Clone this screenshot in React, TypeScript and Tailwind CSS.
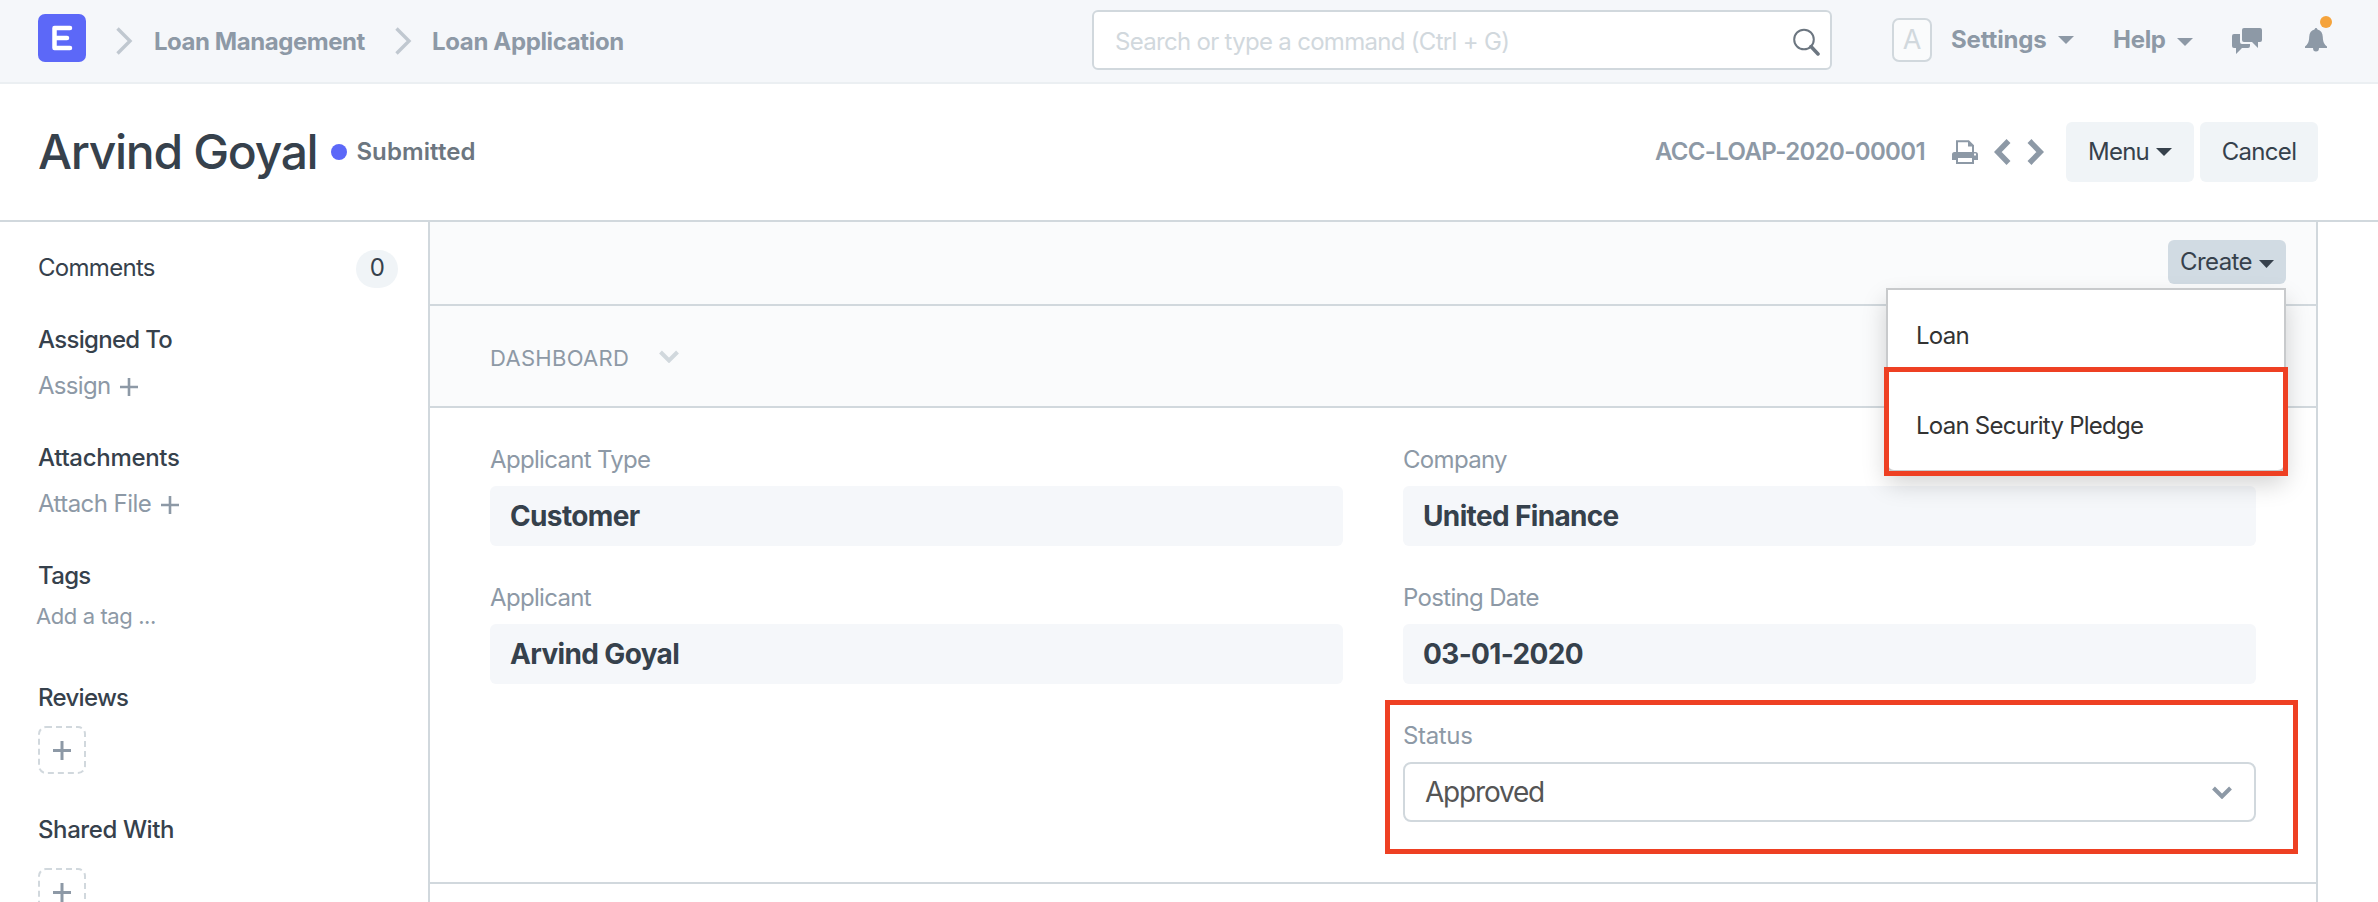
const Plus = () => (
  <svg width="18" height="18" viewBox="0 0 18 18" className="mt-0.5 shrink-0"><path d="M9 0v18M0 9h18" stroke="#8d99a6" strokeWidth="2.600" /></svg>
);

const Caret = ({ w = 16, h = 8 }: { w?: number; h?: number }) => (
  <svg width={w} height={h} viewBox="0 0 16 8" preserveAspectRatio="none" fill="currentColor" className="shrink-0"><path d="M0 0h16L8 8z" /></svg>
);

const Crumb = () => (
  <svg width="18" height="28" viewBox="0 0 18 28" fill="none" className="shrink-0"><path d="M2.500 1.500L15 14L2.500 26.500" stroke="#c0c8d0" strokeWidth="3.400" /></svg>
);

const Down = ({ color }: { color: string }) => (
  <svg width="20" height="13" viewBox="0 0 20 13" fill="none" className="shrink-0"><path d="M1.500 2L10 10.500L18.500 2" stroke={color} strokeWidth="4" /></svg>
);

const Chat = () => (
  <svg width="30" height="26" viewBox="0 0 30 26" fill="#8d99a6" className="shrink-0">
    <path d="M12 0h16a2 2 0 0 1 2 2v10a2 2 0 0 1-2 2h-2v6l-6-6h-8a2 2 0 0 1-2-2V2a2 2 0 0 1 2-2z" />
    <path d="M2 6h6v8a2 2 0 0 0 2 2h8v2a2 2 0 0 1-2 2h-6l-6 6v-6H2a2 2 0 0 1-2-2V8a2 2 0 0 1 2-2z" />
  </svg>
);

const Bell = () => (
  <svg width="22" height="24" viewBox="0 0 22 24" fill="#8d99a6" className="shrink-0">
    <path d="M11 0c.8 0 1.300.6 1.500 1.500C16 2.300 17.600 5 17.800 9c.2 5.500 1.700 7.500 4.200 9.500V20H14a3 3.600 0 0 1-6 0H0v-1.500C2.500 16.500 4 14.500 4.200 9c.2-4 1.800-6.700 5.300-7.500C9.700.6 10.200 0 11 0z" />
  </svg>
);

const Printer = () => (
  <svg width="26" height="24" viewBox="0 0 26 24" fill="none" className="shrink-0">
    <path d="M5 13V1.200h11.500L21 5.700V13" stroke="#8d99a6" strokeWidth="2" />
    <path d="M16 1v5.500h5z" fill="#8d99a6" />
    <path d="M2.500 12h21A2.500 2.500 0 0 1 26 14.500V20h-4v-3H4v3H0v-5.500A2.500 2.500 0 0 1 2.500 12z" fill="#8d99a6" />
    <path d="M5 17v6h16v-6z" stroke="#8d99a6" strokeWidth="2" fill="#fff" />
    <rect x="22" y="13.500" width="2" height="2" fill="#fff" />
  </svg>
);

const Field = ({ label, value }: { label: string; value: string }) => (
  <div className="flex h-[138px] flex-col">
    <span className="h-[34px] text-[24px] leading-[34px] tracking-[-0.68px] text-[#8d99a6]">{label}</span>
    <div className="mt-[9px] flex h-[60px] items-center rounded-[6px] bg-[#f5f7fa] px-5 text-[28px] font-bold tracking-[-0.65px] text-[#36414c]">{value}</div>
  </div>
);

const AddBox = () => (
  <svg width="48" height="48" viewBox="0 0 48 48" fill="none">
    <rect x="1" y="1" width="46" height="46" rx="7" stroke="#d1d8dd" strokeWidth="2" strokeDasharray="6 4" />
    <path d="M24 15v19M15 24.500h18" stroke="#8d99a6" strokeWidth="3" />
  </svg>
);

export default function App() {
  return (
    <div className="flex h-[902px] w-[2378px] flex-col overflow-hidden bg-white font-['Inter',sans-serif] text-[24px] text-[#36414c]">
      <nav className="flex h-[84px] shrink-0 items-start border-b-2 border-[#ebeff2] bg-[#f5f7fa] pl-[38px] font-semibold text-[#8d99a6]">
        <svg width="48" height="48" viewBox="0 0 48 48" className="mt-[14px]">
          <rect width="48" height="48" rx="7" fill="#5c68f8" />
          <path d="M32 14H16.500V34H32M16.500 24H29" stroke="#fff" strokeWidth="4.500" fill="none" strokeLinecap="round" strokeLinejoin="round" />
        </svg>
        <div className="ml-[29px] flex h-[82px] items-center">
          <Crumb />
          <span className="ml-[21px] w-[240px] pt-0.5 font-bold tracking-[-0.45px] whitespace-nowrap">Loan Management</span>
          <Crumb />
          <span className="ml-[20px] pt-0.5 font-bold tracking-[-0.35px] whitespace-nowrap">Loan Application</span>
        </div>
        <div className="mr-[60px] ml-auto mt-[10px] flex h-[60px] w-[740px] items-center justify-between rounded-[6px] border-2 border-[#d1d8dd] bg-white pr-[10px] pl-[21px] font-normal text-[#d1d8dd]">
          <span className="pt-[3px] tracking-[-0.7px]">Search or type a command (Ctrl + G)</span>
          <svg width="28" height="28" viewBox="0 0 28 28" fill="none" stroke="#6c7680" className="mt-1"><circle cx="12" cy="11.500" r="9.800" strokeWidth="2" /><path d="M19 18.500l7 7.500" strokeWidth="3.500" strokeLinecap="round" /></svg>
        </div>
        <div className="flex h-[80px] w-[486px] items-center">
          <div className="flex h-[44px] w-[40px] items-center justify-center rounded-[7px] border-2 border-[#d1d8dd] bg-[#fafbfc] text-[27px] font-normal text-[#d1d8dd]">A</div>
          <span className="ml-[19px] w-[107px] font-bold tracking-[-0.15px]">Settings</span>
          <Caret />
          <span className="ml-[39px] w-[64px] font-bold tracking-[-0.3px]">Help</span>
          <span className="pt-[3px]"><Caret /></span>
          <span className="ml-[39px] pt-px"><Chat /></span>
          <div className="relative ml-[43px]">
            <Bell />
            <i className="absolute -top-[12px] left-[15px] size-3 rounded-full bg-[#f5a33b]" />
          </div>
        </div>
      </nav>

      <header className="flex h-[138px] shrink-0 items-center border-b-2 border-[#d1d8dd] pr-[60px] pl-[38px]">
        <h1 className="text-[48px] font-medium tracking-[-1.3px]">Arvind Goyal</h1>
        <i className="ml-[14px] size-4 rounded-full bg-[#5c68f8]" />
        <span className="ml-[9px] font-semibold tracking-[0.1px] text-[#6c7680]">Submitted</span>
        <div className="mr-[22px] ml-auto flex items-center">
          <span className="mr-[27px] font-semibold tracking-[-0.65px] text-[#8d99a6]">ACC-LOAP-2020-00001</span>
          <Printer />
          <svg width="50" height="26" viewBox="0 0 50 26" fill="none" stroke="#8d99a6" strokeWidth="5.500" className="ml-4"><path d="M14.500 2L3.800 13L14.500 24M35.500 2L46.200 13L35.500 24" /></svg>
        </div>
        <button className="flex h-[60px] w-[128px] items-center justify-center gap-[7px] rounded-[6px] bg-[#f0f4f7] tracking-[-0.75px]">Menu <Caret /></button>
        <button className="ml-[6px] h-[60px] w-[118px] rounded-[6px] bg-[#f0f4f7] tracking-[-0.7px]">Cancel</button>
      </header>

      <div className="flex h-[680px]">
        <aside className="flex w-[428px] flex-col pr-[30px] pl-[38px] tracking-[-0.7px]">
          <div className="mt-[28px] flex h-[38px] items-center justify-between"><span className="pb-0.5">Comments</span><span className="flex h-[38px] w-[42px] items-center justify-center rounded-[20px] bg-[#f0f4f7] pb-0.5">0</span></div>
          <h2 className="mt-[35px] h-[34px] font-medium leading-[34px]">Assigned To</h2>
          <div className="mt-[12px] flex h-[34px] items-center gap-[10px] text-[#8d99a6]">Assign <Plus /></div>
          <h2 className="mt-[38px] h-[34px] font-medium leading-[34px] tracking-[-0.3px]">Attachments</h2>
          <div className="mt-[12px] flex h-[34px] items-center gap-[10px] tracking-[-0.55px] text-[#8d99a6]">Attach File <Plus /></div>
          <h2 className="mt-[38px] h-[34px] font-medium leading-[34px]">Tags</h2>
          <div className="-ml-0.5 mt-[6px] h-[34px] text-[22px] leading-[34px] tracking-[-0.4px] text-[#8d99a6]">Add a tag ...</div>
          <h2 className="mt-[48px] h-[34px] font-medium leading-[34px]">Reviews</h2>
          <div className="mt-[11px] h-[48px]"><AddBox /></div>
          <h2 className="mt-[39px] h-[34px] font-medium leading-[34px] tracking-[-0.4px]">Shared With</h2>
          <div className="mt-[21px]"><AddBox /></div>
        </aside>
        <main className="flex w-[1890px] flex-col border-x-2 border-[#d1d8dd]">
          <div className="flex h-[84px] shrink-0 items-start justify-end border-b-2 border-[#d1d8dd] bg-[#fafbfc] pt-[18px] pr-[30px]">
            <div className="relative">
              <button className="flex h-[44px] w-[118px] items-center justify-center gap-[7px] rounded-[6px] bg-[#d1dbe3] tracking-[-0.6px]">Create <span className="pt-[3px]"><Caret w={15} h={8} /></span></button>
              <div className="absolute top-[48px] right-0 z-10 h-[184px] w-[400px] rounded-b-[8px] border-2 border-[#c8cacc] bg-white tracking-[-0.75px] text-[#333] shadow-[0_12px_24px_rgba(0,0,0,0.175)]">
                <div className="flex h-[90px] items-center pt-[2px] pl-[28px]">Loan</div>
                <div className="flex h-[90px] items-center pt-[2px] pl-[28px]">Loan Security Pledge</div>
                <div className="absolute top-[77px] -left-1 h-[109px] w-[404px] border-5 border-[#ee4023]" />
              </div>
            </div>
          </div>
          <div className="flex h-[102px] shrink-0 items-center border-b-2 border-[#d1d8dd] bg-[#fafbfc] pl-[60px] text-[22px] text-[#8d99a6]"><span className="w-[169px] pt-[4px] tracking-[0.3px]">DASHBOARD</span><Down color="#d1d8dd" /></div>
          <div className="grid h-[476px] shrink-0 grid-cols-2 gap-[60px] border-b-2 border-[#d1d8dd] px-[60px] pt-[35px]">
            <div><Field label="Applicant Type" value="Customer" /><Field label="Applicant" value="Arvind Goyal" /></div>
            <div>
              <Field label="Company" value="United Finance" />
              <Field label="Posting Date" value="03-01-2020" />
              <div className="relative flex flex-col">
                <span className="h-[34px] leading-[34px] tracking-[-0.35px] text-[#8d99a6]">Status</span>
                <div className="mt-[9px] flex h-[60px] items-center justify-between rounded-[8px] border-2 border-[#d1d8dd] pr-[22px] pl-5 text-[28px] tracking-[-1.2px] text-[#555]">Approved<Down color="#8d99a6" /></div>
                <div className="absolute -top-[19px] -left-[18px] h-[154px] w-[913px] border-5 border-[#ee4023]" />
              </div>
            </div>
          </div>
        </main>
      </div>
    </div>
  );
}
